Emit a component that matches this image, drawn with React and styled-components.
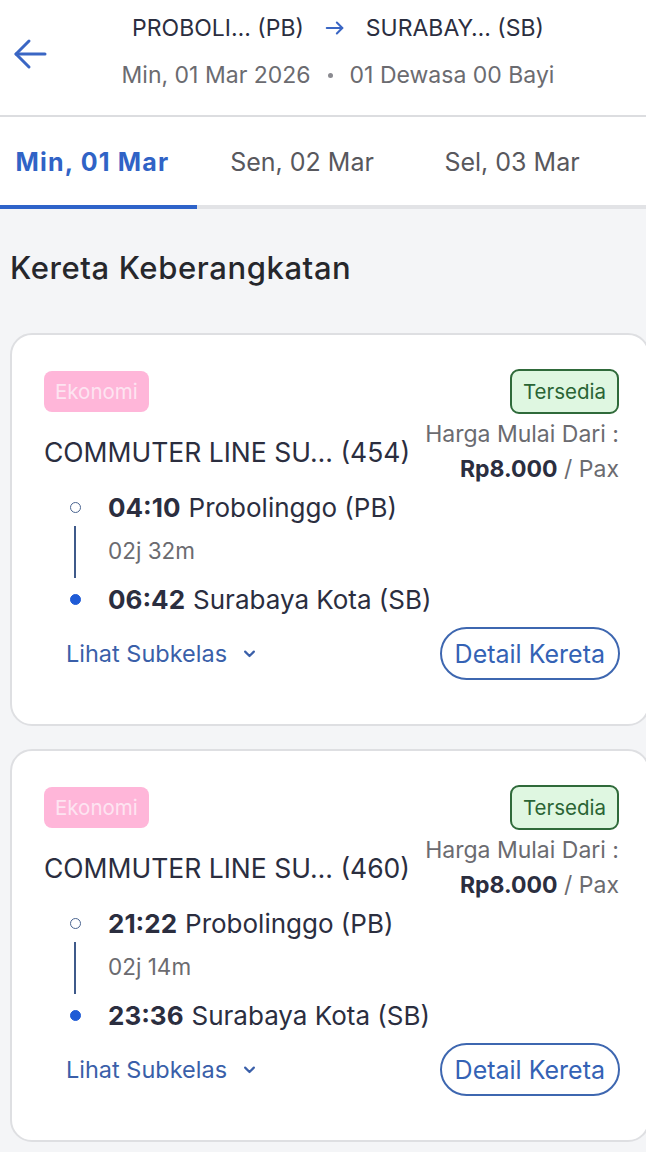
import React from "react";
import styled, { createGlobalStyle } from "styled-components";

const Global = createGlobalStyle`
  html, body { margin: 0; padding: 0; }
  body {
    background: #f4f5f7;
    font-family: Inter, "Noto Sans", sans-serif;
    overflow-x: hidden;
    width: 646px;
  }
`;

const Page = styled.div`
  width: 646px;
  min-height: 1152px;
  background: #f4f5f7;
`;

const Header = styled.header`
  background: #fff;
  height: 117px;
  border-bottom: 2px solid #dcdde0;
  display: flex;
  align-items: center;
  padding-bottom: 12px;
  box-sizing: border-box;
`;

const BackButton = styled.div`
  width: 60px;
  padding-left: 12px;
  box-sizing: border-box;
  display: flex;
  align-items: center;
  color: #3a66c4;
  margin-top: 4px;
`;

const HeaderText = styled.div`
  flex: 1;
  display: flex;
  flex-direction: column;
  align-items: center;
  gap: 19px;
  margin-right: 30px;
`;

const Route = styled.div`
  display: flex;
  align-items: center;
  gap: 20px;
  font-size: 23px;
  line-height: 28px;
  color: #2b2e3f;
`;

const Sub = styled.div`
  font-size: 23px;
  line-height: 28px;
  color: #6b6b70;
  display: flex;
  align-items: center;
  gap: 17px;
`;

const Dot = styled.span`
  width: 5px;
  height: 5px;
  border-radius: 50%;
  background: #8a8a90;
`;

const Tabs = styled.nav`
  background: #fff;
  display: flex;
  height: 88px;
  border-bottom: 4px solid #e2e3e6;
`;

const Tab = styled.div`
  width: ${(p) => p.$w}px;
  box-sizing: border-box;
  display: flex;
  align-items: center;
  justify-content: center;
  padding-right: ${(p) => (p.$active ? 12 : 0)}px;
  padding-top: 2px;
  font-size: 25px;
  letter-spacing: ${(p) => (p.$active ? 1.2 : 0)}px;
  font-weight: ${(p) => (p.$active ? 700 : 400)};
  color: ${(p) => (p.$active ? "#3063c6" : "#58585d")};
  position: relative;
  &::after {
    content: "";
    display: ${(p) => (p.$active ? "block" : "none")};
    position: absolute;
    left: 0;
    right: 0;
    bottom: -4px;
    height: 4px;
    background: #2e63c9;
  }
`;

const SectionTitle = styled.h2`
  margin: 0;
  padding: 40px 0 0 10px;
  font-size: 31px;
  line-height: 37px;
  letter-spacing: 0.6px;
  font-weight: 500;
  color: #26272c;
`;

const List = styled.div`
  display: flex;
  flex-direction: column;
  gap: 23px;
  padding-top: 47px;
`;

const Card = styled.div`
  margin-left: 10px;
  margin-right: -4px;
  background: #fff;
  border: 2px solid #dedfe2;
  border-radius: 22px;
  height: 393px;
  box-sizing: border-box;
  padding: 34px 29px 0 32px;
  display: flex;
  flex-direction: column;
`;

const TopRow = styled.div`
  display: flex;
  justify-content: space-between;
  align-items: flex-start;
`;

const ClassBadge = styled.div`
  background: #ffb6d9;
  color: #fde4f1;
  font-size: 20.5px;
  height: 41px;
  padding: 0 11px;
  display: flex;
  align-items: center;
  border-radius: 8px;
  margin-top: 2px;
`;

const StatusBadge = styled.div`
  background: #dff7e1;
  color: #2a6434;
  border: 2px solid #2f6a3a;
  font-size: 20.5px;
  height: 45px;
  box-sizing: border-box;
  padding: 0 11px;
  display: flex;
  align-items: center;
  border-radius: 9px;
`;

const NameRow = styled.div`
  display: flex;
  justify-content: space-between;
  align-items: center;
  margin-top: 6px;
`;

const TrainName = styled.div`
  font-size: 26.5px;
  line-height: 32px;
  color: #2b2e3f;
`;

const Price = styled.div`
  display: flex;
  flex-direction: column;
  align-items: flex-end;
  gap: 7px;
  font-size: 23px;
  line-height: 28px;
  color: #6b6b70;
`;

const PriceValue = styled.div`
  font-size: 23px;
  color: #6b6b70;
  b {
    color: #2b2e3f;
    font-weight: 700;
  }
`;

const Timeline = styled.div`
  display: grid;
  grid-template-columns: 20px 1fr;
  column-gap: 23px;
  margin-left: 21px;
  margin-top: 8px;
`;

const Marker = styled.div`
  display: flex;
  flex-direction: column;
  align-items: center;
  justify-content: center;
`;

const Circle = styled.span`
  width: 11px;
  height: 11px;
  border-radius: 50%;
  box-sizing: border-box;
  border: 1.5px solid;
  background: ${(p) => (p.$filled ? "#1f5bd6" : "#fff")};
  border-color: ${(p) => (p.$filled ? "#1f5bd6" : "#4a6490")};
`;

const Line = styled.span`
  width: 1.5px;
  flex: 1;
  margin: 3px 0 5px;
  background: #3f5a8a;
`;

const Stop = styled.div`
  font-size: 26px;
  color: #2b2e3f;
  height: 32px;
  display: flex;
  align-items: center;
  white-space: nowrap;
  b {
    font-weight: 700;
    margin-right: 8px;
  }
`;

const Duration = styled.div`
  font-size: 22.5px;
  color: #6b6b70;
  height: 60px;
  padding-bottom: 6px;
  box-sizing: border-box;
  display: flex;
  align-items: center;
`;

const BottomRow = styled.div`
  display: flex;
  justify-content: space-between;
  align-items: center;
  margin-top: 12px;
  padding-left: 22px;
`;

const SubLink = styled.div`
  display: flex;
  align-items: center;
  gap: 15px;
  font-size: 23.5px;
  color: #3a5fa9;
`;

const DetailButton = styled.button`
  font-family: inherit;
  font-size: 25px;
  color: #3462b5;
  background: #fff;
  border: 2px solid #3e67b0;
  border-radius: 30px;
  height: 53px;
  padding: 0 13px;
  margin-right: -1px;
`;

const Arrow = () => (
  <svg width="36" height="36" viewBox="0 0 36 36" fill="none" stroke="currentColor" strokeWidth="3" strokeLinecap="round" strokeLinejoin="round">
    <path d="M33 18H4" />
    <path d="M17 5L4 18l13 13" />
  </svg>
);

const SmallArrow = () => (
  <svg width="22" height="22" viewBox="0 0 24 24" fill="none" stroke="#3a66c4" strokeWidth="2.2" strokeLinecap="round" strokeLinejoin="round">
    <path d="M3 12h17" />
    <path d="M14 6l6 6-6 6" />
  </svg>
);

const Chevron = () => (
  <svg width="15" height="15" viewBox="0 0 24 24" fill="none" stroke="#3a5fa9" strokeWidth="3.5" strokeLinecap="round" strokeLinejoin="round">
    <path d="M5 9l7 7 7-7" />
  </svg>
);

const trains = [
  { no: "454", dep: "04:10", dur: "02j 32m", arr: "06:42" },
  { no: "460", dep: "21:22", dur: "02j 14m", arr: "23:36" },
];

const TrainCard = ({ t }) => (
  <Card>
    <TopRow>
      <ClassBadge>Ekonomi</ClassBadge>
      <StatusBadge>Tersedia</StatusBadge>
    </TopRow>
    <NameRow>
      <TrainName>COMMUTER LINE SU… ({t.no})</TrainName>
      <Price>
        <div>Harga Mulai Dari :</div>
        <PriceValue>
          <b>Rp8.000</b> / Pax
        </PriceValue>
      </Price>
    </NameRow>
    <Timeline>
      <Marker><Circle /></Marker>
      <Stop><b>{t.dep}</b>Probolinggo (PB)</Stop>
      <Marker><Line /></Marker>
      <Duration>{t.dur}</Duration>
      <Marker><Circle $filled /></Marker>
      <Stop><b>{t.arr}</b>Surabaya Kota (SB)</Stop>
    </Timeline>
    <BottomRow>
      <SubLink>Lihat Subkelas <Chevron /></SubLink>
      <DetailButton>Detail Kereta</DetailButton>
    </BottomRow>
  </Card>
);

export default function App() {
  return (
    <Page>
      <Global />
      <Header>
        <BackButton><Arrow /></BackButton>
        <HeaderText>
          <Route>
            <span>PROBOLI… (PB)</span>
            <SmallArrow />
            <span>SURABAY… (SB)</span>
          </Route>
          <Sub>
            <span>Min, 01 Mar 2026</span>
            <Dot />
            <span>01 Dewasa 00 Bayi</span>
          </Sub>
        </HeaderText>
      </Header>
      <Tabs>
        <Tab $w={197} $active>Min, 01 Mar</Tab>
        <Tab $w={210}>Sen, 02 Mar</Tab>
        <Tab $w={210}>Sel, 03 Mar</Tab>
      </Tabs>
      <SectionTitle>Kereta Keberangkatan</SectionTitle>
      <List>
        {trains.map((t) => (
          <TrainCard key={t.no} t={t} />
        ))}
      </List>
    </Page>
  );
}
